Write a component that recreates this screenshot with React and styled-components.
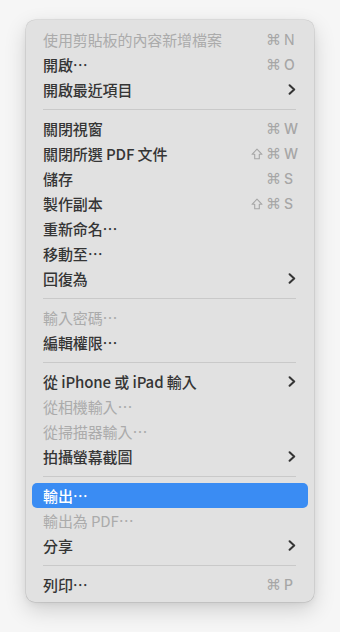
import React from "react";
import styled, { createGlobalStyle } from "styled-components";

const Global = createGlobalStyle`
  html, body { margin: 0; padding: 0; background: #f6f6f6; }
  body {
    font-family: "Noto Sans CJK TC", "Noto Sans", sans-serif;
    -webkit-font-smoothing: antialiased;
  }
`;

const Page = styled.div`
  width: 340px;
  height: 632px;
  padding: 20px 0 0 26px;
  box-sizing: border-box;
`;

const Menu = styled.div`
  width: 288px;
  box-sizing: border-box;
  padding: 7px 6px 5px;
  background: #e1e1e1;
  border-radius: 9px;
  box-shadow: 0 0 0 0.5px rgba(0, 0, 0, 0.14), 0 8px 22px rgba(0, 0, 0, 0.16),
    0 2px 6px rgba(0, 0, 0, 0.06);
  display: flex;
  flex-direction: column;
`;

const Row = styled.div`
  height: 25px;
  display: flex;
  align-items: center;
  padding: 0 10px 0 11px;
  border-radius: 5px;
  background: ${(p) => (p.$active ? "#3a8cf3" : "transparent")};
  color: ${(p) => (p.$active ? "#ffffff" : p.$disabled ? "#ababab" : "#353535")};
  font-size: 15px;
  font-weight: ${(p) => (p.$disabled ? 400 : 500)};
  letter-spacing: -0.1px;
  white-space: nowrap;
`;

const Label = styled.span`
  flex: 1;
`;

const Shortcut = styled.span`
  display: flex;
  align-items: center;
  color: ${(p) => (p.$active ? "#ffffff" : "#a6a6a6")};
`;

const Mods = styled.span`
  display: inline-flex;
  align-items: center;
  gap: 3px;
  font-family: "DejaVu Sans", "Noto Sans", sans-serif;
  font-size: 15px;
`;

const ShiftIcon = styled.svg`
  width: 12px;
  height: 12px;
`;

const Key = styled.span`
  display: inline-block;
  width: 14px;
  margin-left: 3px;
  font-family: "Inter", "Noto Sans", sans-serif;
  font-size: 14px;
  text-align: left;
`;

const Chevron = styled.svg`
  width: 8px;
  height: 11px;
  margin-right: 2px;
  color: ${(p) => (p.$active ? "#fff" : "#353535")};
`;

const Separator = styled.div`
  height: 14px;
  display: flex;
  align-items: center;
  padding: 0 12px 0 11px;
  &::after {
    content: "";
    flex: 1;
    height: 1px;
    background: #c9c9c9;
  }
`;

const items = [
  { label: "使用剪貼板的內容新增檔案", key: "N", disabled: true },
  { label: "開啟…", key: "O" },
  { label: "開啟最近項目", sub: true },
  "sep",
  { label: "關閉視窗", key: "W" },
  { label: "關閉所選 PDF 文件", shift: true, key: "W" },
  { label: "儲存", key: "S" },
  { label: "製作副本", shift: true, key: "S" },
  { label: "重新命名…" },
  { label: "移動至…" },
  { label: "回復為", sub: true },
  "sep",
  { label: "輸入密碼…", disabled: true },
  { label: "編輯權限…" },
  "sep",
  { label: "從 iPhone 或 iPad 輸入", sub: true },
  { label: "從相機輸入…", disabled: true },
  { label: "從掃描器輸入…", disabled: true },
  { label: "拍攝螢幕截圖", sub: true },
  "sep",
  { label: "輸出…", active: true },
  { label: "輸出為 PDF…", disabled: true },
  { label: "分享", sub: true },
  "sep",
  { label: "列印…", key: "P" },
];

export default function App() {
  return (
    <>
      <Global />
      <Page>
        <Menu lang="zh-Hant">
          {items.map((it, i) =>
            it === "sep" ? (
              <Separator key={i} />
            ) : (
              <Row key={i} $disabled={it.disabled} $active={it.active}>
                <Label>{it.label}</Label>
                {it.key && (
                  <Shortcut $active={it.active}>
                    <Mods>
                      {it.shift && (
                        <ShiftIcon viewBox="0 0 12 12">
                          <path
                            d="M6 1.2 L11 6.3 H8.3 V10.8 H3.7 V6.3 H1 Z"
                            fill="none"
                            stroke="currentColor"
                            strokeWidth="1.1"
                            strokeLinejoin="round"
                          />
                        </ShiftIcon>
                      )}
                      <span>⌘</span>
                    </Mods>
                    <Key>{it.key}</Key>
                  </Shortcut>
                )}
                {it.sub && (
                  <Chevron viewBox="0 0 8 11" $active={it.active}>
                    <path
                      d="M1.6 1.2 L6.2 5.5 L1.6 9.8"
                      fill="none"
                      stroke="currentColor"
                      strokeWidth="2"
                      strokeLinecap="round"
                      strokeLinejoin="round"
                    />
                  </Chevron>
                )}
              </Row>
            )
          )}
        </Menu>
      </Page>
    </>
  );
}
